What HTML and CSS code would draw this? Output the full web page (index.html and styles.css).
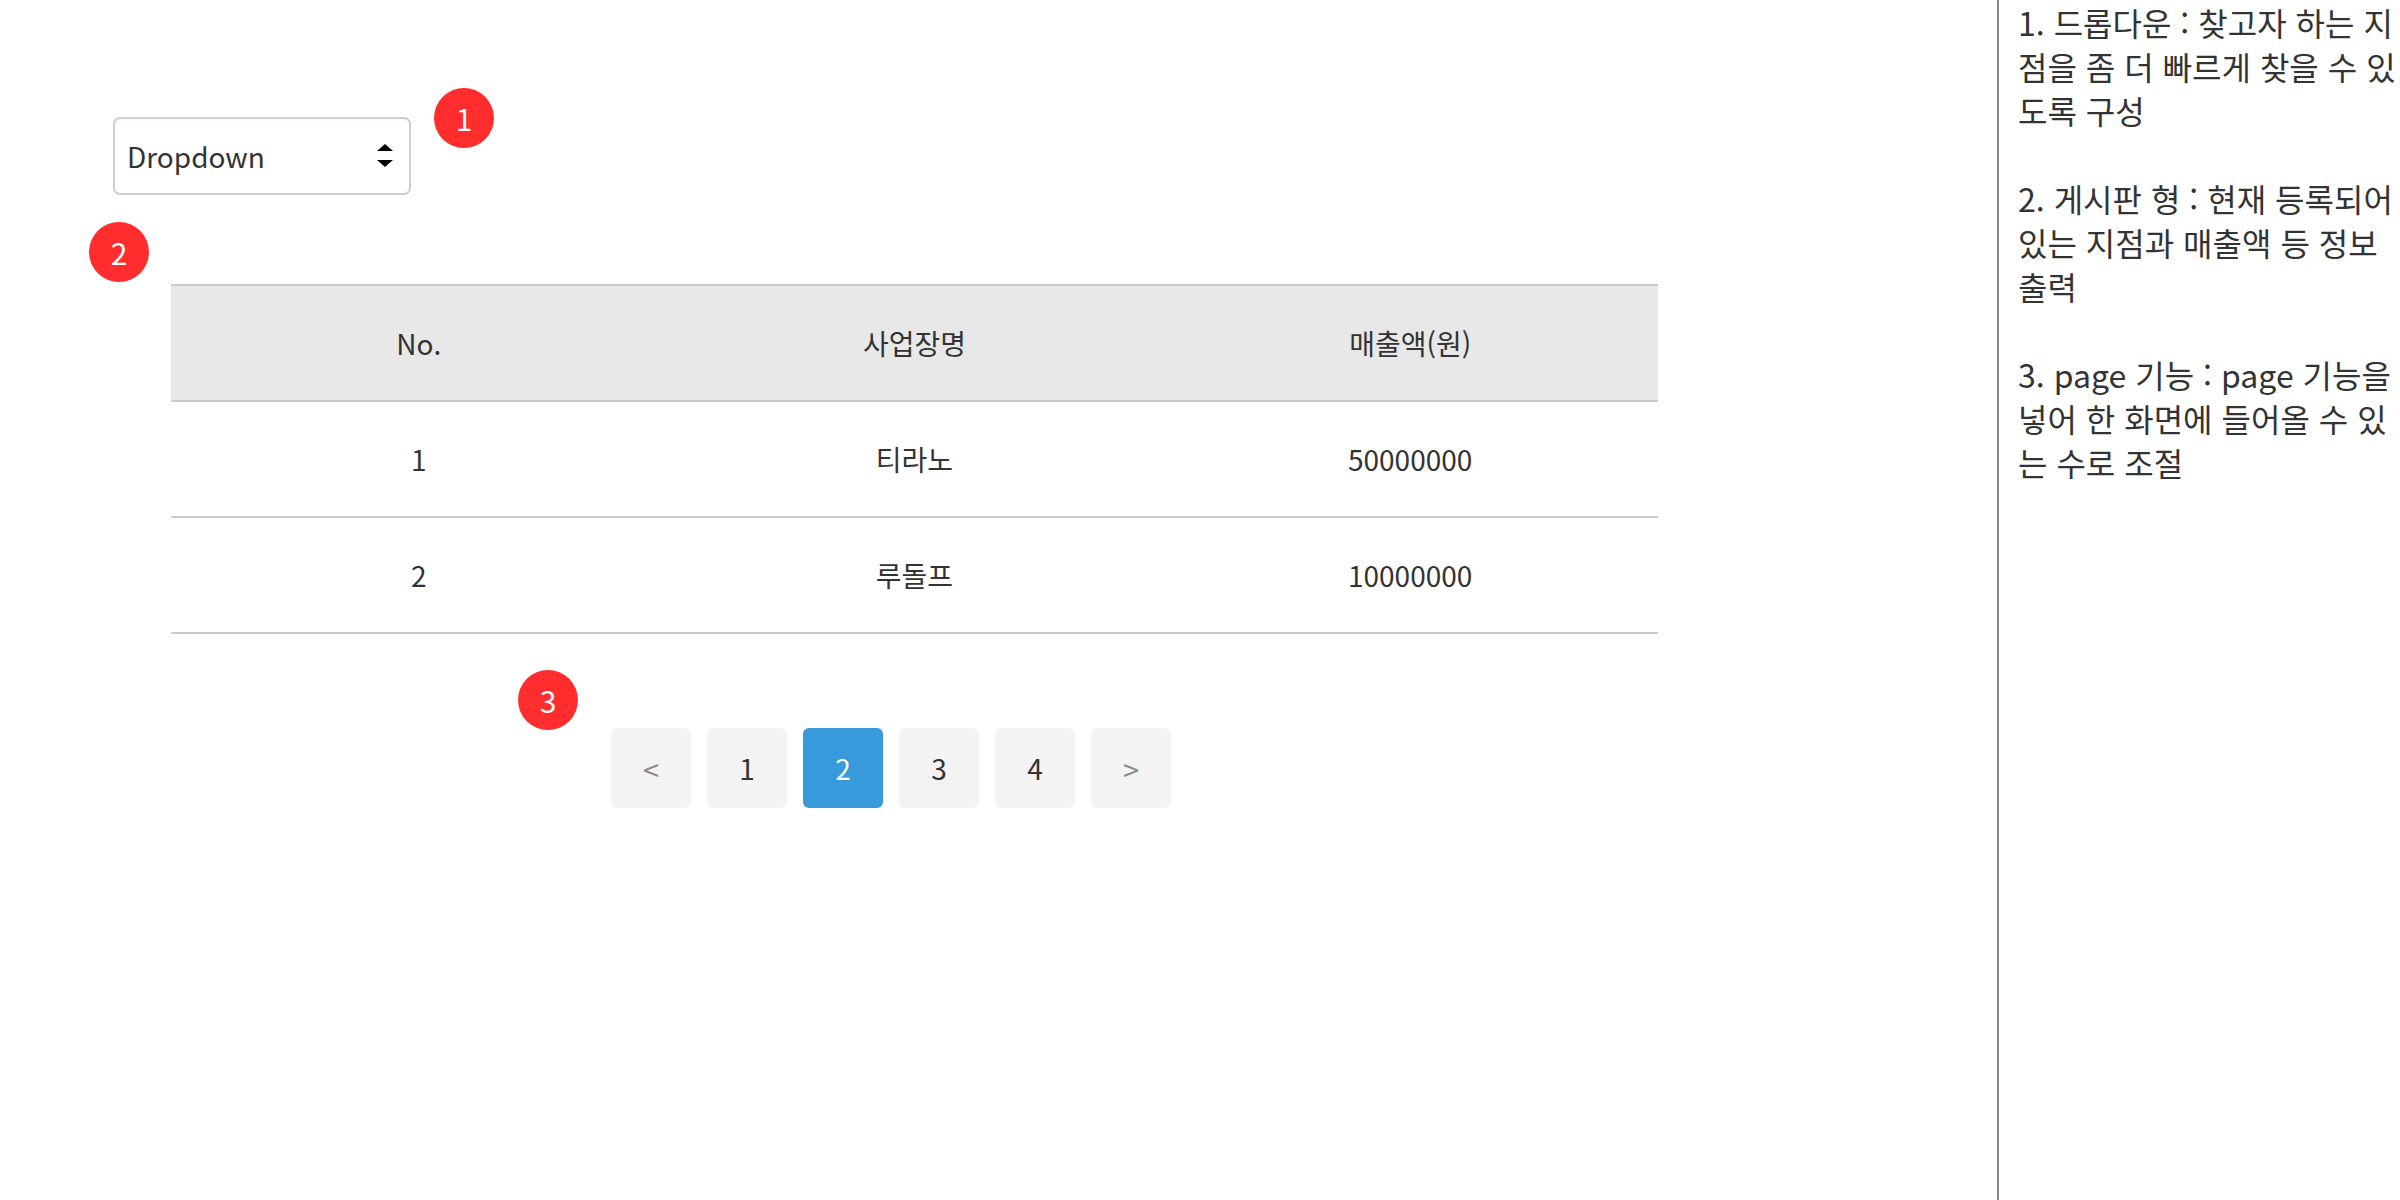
FILE: index.html
```html
<!DOCTYPE html>
<html lang="ko">
<head>
<meta charset="utf-8">
<title>지점 매출 현황</title>
<link rel="stylesheet" href="styles.css">
</head>
<body>
<div class="page">
  <main class="main">
    <div class="select">
      <span class="select-label">Dropdown</span>
      <svg class="select-arrows" width="18" height="26" viewBox="0 0 18 26">
        <path d="M9 1 L17 8 L1 8 Z" fill="#000"/>
        <path d="M1 17 L17 17 L9 24 Z" fill="#000"/>
      </svg>
    </div>

    <table class="board">
      <thead>
        <tr><th>No.</th><th>사업장명</th><th>매출액(원)</th></tr>
      </thead>
      <tbody>
        <tr><td>1</td><td>티라노</td><td>50000000</td></tr>
        <tr><td>2</td><td>루돌프</td><td>10000000</td></tr>
      </tbody>
    </table>

    <nav class="pager">
      <a class="pg pg-arrow">&lt;</a>
      <a class="pg">1</a>
      <a class="pg pg-active">2</a>
      <a class="pg">3</a>
      <a class="pg">4</a>
      <a class="pg pg-arrow">&gt;</a>
    </nav>

    <span class="badge badge-1">1</span>
    <span class="badge badge-2">2</span>
    <span class="badge badge-3">3</span>
  </main>

  <aside class="notes">
    <p>1. 드롭다운 : 찾고자 하는 지점을 좀 더 빠르게 찾을 수 있도록 구성</p>
    <p>2. 게시판 형 : 현재 등록되어 있는 지점과 매출액 등 정보 출력</p>
    <p>3. page 기능 : page 기능을 넣어 한 화면에 들어올 수 있는 수로 조절</p>
  </aside>
</div>
</body>
</html>
```

FILE: styles.css
```css
html, body {
  margin: 0;
  padding: 0;
  background: #ffffff;
}

body {
  font-family: "Noto Sans CJK KR", "Noto Sans", sans-serif;
  color: #333333;
}

.page {
  display: flex;
  height: 1200px;
  overflow: hidden;
}

.main {
  position: relative;
  flex: 1;
  padding-top: 117px;
  display: flex;
  flex-direction: column;
  align-items: flex-start;
}

/* dropdown */
.select {
  margin-left: 113px;
  box-sizing: border-box;
  width: 298px;
  height: 78px;
  border: 2px solid #cfcfcf;
  border-radius: 7px;
  padding: 0 12px 0 12px;
  display: flex;
  align-items: center;
  justify-content: space-between;
  box-shadow: inset 0 1px 2px rgba(0,0,0,0.04);
}

.select-label {
  font-size: 28px;
  color: #333333;
}

.select-arrows {
  margin-right: 3px;
}

/* table */
.board {
  margin-top: 89px;
  margin-left: 171px;
  width: 1487px;
  border-collapse: collapse;
  table-layout: fixed;
  border-top: 2px solid #cccccc;
}

.board th,
.board td {
  height: 114px;
  padding: 0;
  text-align: center;
  font-size: 28px;
  font-weight: 400;
  color: #333333;
  border-bottom: 2px solid #cccccc;
}

.board thead th {
  background: #e8e8e8;
}

/* pagination */
.pager {
  margin-top: 94px;
  margin-left: 611px;
  display: flex;
  gap: 16px;
}

.pg {
  width: 80px;
  height: 80px;
  border-radius: 6px;
  background: #f3f3f3;
  display: flex;
  align-items: center;
  justify-content: center;
  font-size: 28px;
  color: #333333;
}

.pg-arrow {
  color: #8a8a8a;
  font-size: 29px;
}

.pg-active {
  background: #3899db;
  color: #ffffff;
}

/* annotation badges */
.badge {
  position: absolute;
  width: 60px;
  height: 60px;
  border-radius: 50%;
  background: #ff2d2d;
  color: #ffffff;
  font-size: 30px;
  display: flex;
  align-items: center;
  justify-content: center;
  line-height: 1;
}

.badge-1 { left: 434px; top: 88px; }
.badge-2 { left: 89px; top: 222px; }
.badge-3 { left: 518px; top: 670px; }

/* notes sidebar */
.notes {
  flex: 0 0 403px;
  box-sizing: border-box;
  border-left: 2px solid #888888;
  padding-left: 19px;
  font-size: 32px;
  line-height: 44px;
  color: #333333;
}

.notes p {
  margin: 0 0 44px 0;
}
```
